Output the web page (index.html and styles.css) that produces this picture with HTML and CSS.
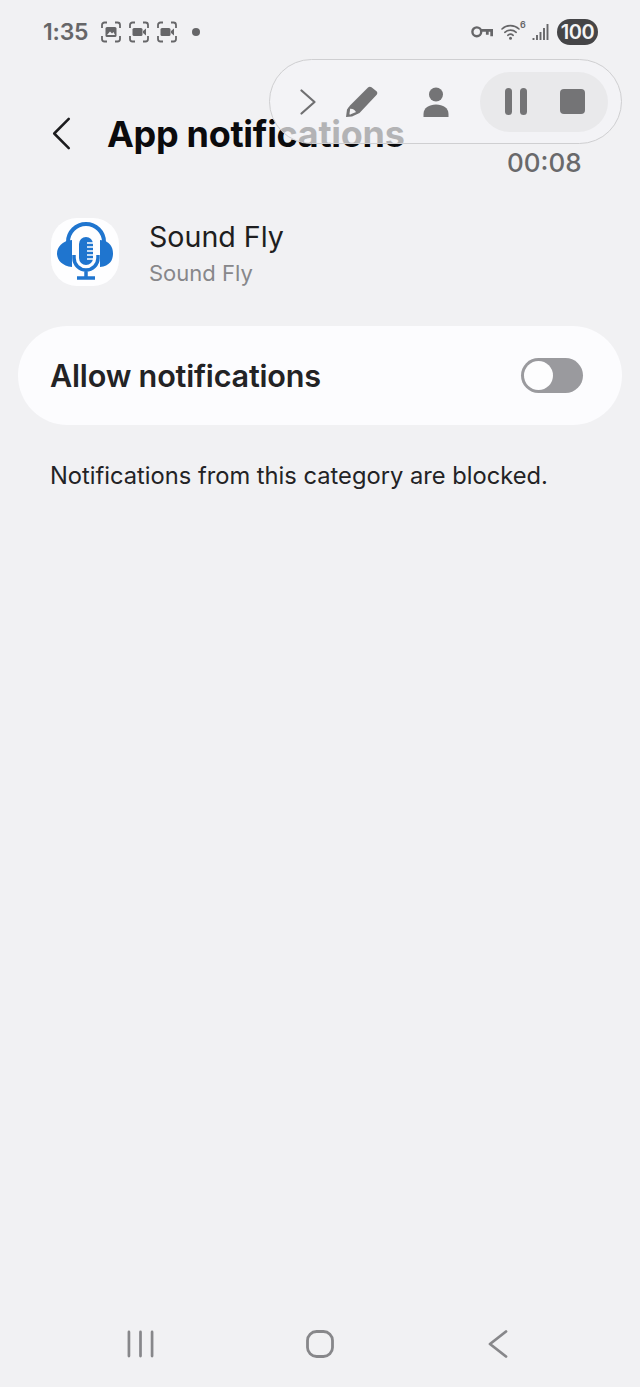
FILE: index.html
```html
<!DOCTYPE html>
<html lang="en">
<head>
<meta charset="utf-8">
<title>App notifications</title>
<link rel="stylesheet" href="styles.css">
</head>
<body>
<div class="screen">
  <div class="status">
    <div class="status-left">
      <span class="clock">1:35</span>
      <svg class="cap" viewBox="0 0 22 22"><path class="corners" d="M2 7V4a2.500 2.500 0 0 1 2.500-2.500H7M15 1.500h2.500A2.500 2.500 0 0 1 20 4v3M20 15v3a2.500 2.500 0 0 1-2.500 2.500H15M7 20.500H4.500A2.500 2.500 0 0 1 2 18v-3"/><rect class="solid" x="5.500" y="6" width="11" height="10" rx="1.500"/><path class="cut" d="M7 14l3-3.500 2 2 1.500-1.500L15 14z"/></svg>
      <svg class="cap" viewBox="0 0 22 22"><path class="corners" d="M2 7V4a2.500 2.500 0 0 1 2.500-2.500H7M15 1.500h2.500A2.500 2.500 0 0 1 20 4v3M20 15v3a2.500 2.500 0 0 1-2.500 2.500H15M7 20.500H4.500A2.500 2.500 0 0 1 2 18v-3"/><rect class="solid" x="4.500" y="7" width="10" height="8" rx="1.500"/><path class="solid" d="M15 10l3-2.500v7L15 12z"/></svg>
      <svg class="cap" viewBox="0 0 22 22"><path class="corners" d="M2 7V4a2.500 2.500 0 0 1 2.500-2.500H7M15 1.500h2.500A2.500 2.500 0 0 1 20 4v3M20 15v3a2.500 2.500 0 0 1-2.500 2.500H15M7 20.500H4.500A2.500 2.500 0 0 1 2 18v-3"/><rect class="solid" x="4.500" y="7" width="10" height="8" rx="1.500"/><path class="solid" d="M15 10l3-2.500v7L15 12z"/></svg>
      <span class="dot"></span>
    </div>
    <div class="status-right">
      <svg class="key" viewBox="0 0 22 14"><circle class="ring" cx="5.800" cy="6.800" r="4.400"/><path class="ring thick" d="M10 5.300h10.700v6M16.300 5.300v4.500"/></svg>
      <span class="wifi-wrap">
        <svg class="wifi" viewBox="0 0 19 17"><path class="arc" d="M1 6a12.500 12.500 0 0 1 17 0M3.800 9.300a8.500 8.500 0 0 1 11.400 0M6.800 12.300a4 4 0 0 1 5.400 0"/><circle class="solid" cx="9.500" cy="15.200" r="1.500"/></svg>
        <span class="six">6</span>
      </span>
      <svg class="signal" viewBox="0 0 17 18"><path class="bars" d="M1.500 17v-2M5 17v-5M8.500 17V9M12 17V5M15.500 17V1"/></svg>
      <span class="battery">100</span>
    </div>
  </div>

  <header class="appbar">
    <svg class="back" viewBox="0 0 20 34"><path d="M18 2L3 17l15 15"/></svg>
    <h1 class="title">App notifications</h1>
  </header>

  <section class="app-row">
    <div class="app-icon">
      <svg viewBox="0 0 68 68">
        <path class="logo-arc" d="M17 40V24a18 18 0 0 1 36 0v16"/>
        <path class="logo-fill" d="M21 22C11 23 6 29 6 35.500S11 48 21 49zM49 22c10 1 13 7 13 13.500S59 48 49 49z"/>
        <rect class="logo-fill" x="28" y="19" width="14" height="28" rx="7"/>
        <path class="logo-teeth" d="M36 25h6M36 29h6M36 33h6M36 37h6M36 41h6"/>
        <path class="logo-arc thin" d="M23 37v3a12 12 0 0 0 24 0v-3M35 52v8M26 60h18"/>
      </svg>
    </div>
    <div class="app-text">
      <div class="app-name">Sound Fly</div>
      <div class="app-sub">Sound Fly</div>
    </div>
  </section>

  <section class="card">
    <span class="card-label">Allow notifications</span>
    <span class="toggle"><span class="knob"></span></span>
  </section>

  <p class="note">Notifications from this category are blocked.</p>

  <nav class="navbar">
    <svg class="nav-recents" viewBox="0 0 28 28"><path d="M2 1.500v25M14 1.500v25M26 1.500v25"/></svg>
    <svg class="nav-home" viewBox="0 0 28 28"><rect x="1.500" y="1.500" width="25" height="25" rx="9"/></svg>
    <svg class="nav-back" viewBox="0 0 20 28"><path d="M18 1.500L2 14l16 12.500"/></svg>
  </nav>

  <div class="recorder">
    <div class="rec-tools">
      <svg class="rec-chevron" viewBox="0 0 16 26"><path d="M1.500 1.500L14.500 13 1.500 24.500"/></svg>
      <svg class="rec-pencil" viewBox="0 0 34 32"><path class="solid-rec" d="M24 1.500c1-1 2.500-1 3.500-.2l5 4c1 .9 1.100 2.400.2 3.400L15.500 27 8 30.500 2 31l1-7.500 3-4z"/><path class="cut-rec" d="M5.500 22c3-.5 6 1 7.500 4.500L7 29l-2.500.4z"/></svg>
      <svg class="rec-person" viewBox="0 0 26 30"><circle class="solid-rec" cx="13" cy="7.500" r="7"/><path class="solid-rec" d="M.5 30v-3C.5 21 6 17.500 13 17.500S25.500 21 25.500 27v3z"/></svg>
    </div>
    <div class="rec-controls">
      <span class="pause"><i></i><i></i></span>
      <span class="stop"></span>
    </div>
  </div>
  <div class="timer">00:08</div>
</div>
</body>
</html>
```
FILE: styles.css
```css
* { box-sizing: border-box; }
html, body { margin: 0; padding: 0; }
body { background: #f1f1f3; font-family: Inter, Roboto, "Liberation Sans", sans-serif; color: #232325; }
.screen { position: relative; width: 640px; height: 1387px; display: flex; flex-direction: column; overflow: hidden; }

.status { height: 98px; padding: 18px 42px 0 43px; display: flex; justify-content: space-between; align-items: flex-start; color: #666668; }
.status-left, .status-right { display: flex; align-items: center; height: 28px; }
.clock { font-size: 23px; font-weight: 600; width: 57px; white-space: nowrap; letter-spacing: -.2px; }
.cap { width: 22px; height: 22px; margin-right: 6px; }
.corners { fill: none; stroke: #666668; stroke-width: 1.800; }
.solid { fill: #666668; }
.cut { fill: #f1f1f3; }
.dot { width: 8px; height: 8px; border-radius: 50%; background: #666668; margin-left: 8px; }
.key { width: 22px; height: 14px; margin-right: 8px; }
.ring { fill: none; stroke: #666668; stroke-width: 2.400; }
.ring.thick { stroke-width: 2.800; }
.wifi-wrap { display: flex; align-items: flex-start; width: 22px; height: 20px; margin-right: 9px; margin-top: -4px; }
.wifi { width: 19px; height: 17px; flex: none; margin-top: 3px; }
.arc { fill: none; stroke: #666668; stroke-width: 1.600; stroke-linecap: round; }
.six { font-size: 9px; line-height: 10px; font-weight: 600; color: #666668; }
.signal { width: 17px; height: 18px; margin-right: 8px; }
.bars { fill: none; stroke: #666668; stroke-width: 1.900; }
.battery { width: 41px; height: 26px; border-radius: 13px; background: #454547; color: #f4f4f4; font-size: 20px; font-weight: 600; display: flex; align-items: center; justify-content: center; letter-spacing: -.4px; }

.appbar { height: 72px; padding-left: 51px; display: flex; align-items: center; }
.back { width: 20px; height: 33px; flex: none; margin-top: -1px; }
.back path { fill: none; stroke: #1c1c1e; stroke-width: 2.600; stroke-linecap: round; stroke-linejoin: round; }
.title { margin: 0 0 0 36px; font-size: 36px; font-weight: 700; color: #0b0b0d; white-space: nowrap; letter-spacing: -.3px; }

.app-row { margin-top: 48px; height: 68px; padding-left: 51px; display: flex; align-items: center; }
.app-icon { width: 68px; height: 68px; border-radius: 26px; background: #fefeff; flex: none; }
.app-icon svg { display: block; width: 68px; height: 68px; }
.logo-arc { fill: none; stroke: #1f75cf; stroke-width: 4; }
.logo-arc.thin { stroke-width: 3.500; }
.logo-fill { fill: #1f75cf; }
.logo-teeth { stroke: #fefeff; stroke-width: 1.500; fill: none; }
.app-text { margin-left: 30px; padding-top: 6px; }
.app-name { font-size: 28.600px; font-weight: 400; line-height: 36px; color: #1e1e20; white-space: nowrap; }
.app-sub { font-size: 22px; line-height: 36px; color: #87878a; white-space: nowrap; }

.card { margin: 40px 18px 0; height: 99px; padding: 0 39px 0 32px; border-radius: 50px; background: #fcfcfe; display: flex; align-items: center; justify-content: space-between; }
.card-label { font-size: 30.600px; font-weight: 600; color: #232325; white-space: nowrap; letter-spacing: -.2px; }
.toggle { width: 62px; height: 35px; border-radius: 18px; background: #9a9a9e; padding: 3px; display: block; }
.knob { display: block; width: 29px; height: 29px; border-radius: 50%; background: #fdfdfe; }

.note { margin: 36px 0 0 50px; font-size: 23.700px; line-height: 30px; color: #232325; white-space: nowrap; }

.navbar { margin-top: auto; margin-bottom: 28px; height: 30px; display: grid; grid-template-columns: 178px 171px 1fr; padding-left: 127px; align-items: center; }
.nav-recents { width: 27px; height: 28px; }
.nav-home { width: 28px; height: 28px; margin-left: 1px; }
.nav-back { width: 20px; height: 28px; margin-left: 12px; }
.navbar path, .navbar rect { fill: none; stroke: #87878a; stroke-width: 2.800; stroke-linecap: round; stroke-linejoin: round; }

.recorder { position: absolute; left: 269px; top: 59px; width: 353px; height: 85px; border-radius: 43px; border: 1.500px solid #cfcfd1; background: rgba(244, 244, 246, .72); display: flex; align-items: center; justify-content: space-between; padding: 0 13px 0 30px; }
.rec-tools { display: flex; align-items: center; }
.rec-chevron { width: 16px; height: 26px; }
.rec-chevron path { fill: none; stroke: #6f6f71; stroke-width: 2.200; stroke-linecap: round; stroke-linejoin: round; }
.rec-pencil { width: 34px; height: 32px; margin-left: 28px; }
.rec-person { width: 26px; height: 30px; margin-left: 45px; }
.solid-rec { fill: #747476; }
.cut-rec { fill: #f2f2f4; stroke: #747476; stroke-width: 1.500; }
.rec-controls { width: 128px; height: 60px; border-radius: 30px; background: #e9e9eb; display: flex; align-items: center; padding-left: 25px; }
.pause { display: flex; gap: 8px; }
.pause i { display: block; width: 7px; height: 27px; border-radius: 3.500px; background: #747476; }
.stop { width: 25px; height: 25px; border-radius: 4px; background: #747476; margin-left: 33px; }
.timer { position: absolute; left: 507px; top: 147px; font-size: 26px; line-height: 32px; font-weight: 500; color: #69696b; }
```
